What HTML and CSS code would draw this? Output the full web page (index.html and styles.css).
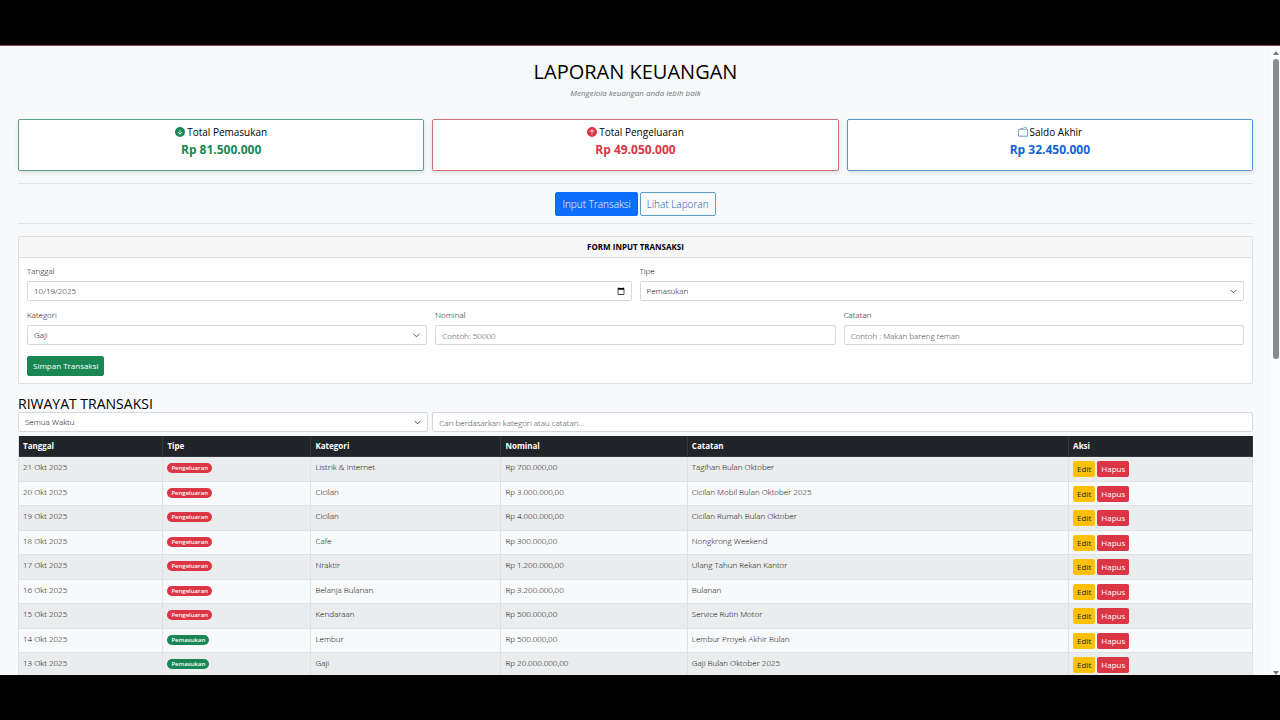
FILE: index.html
```html
<!DOCTYPE html>
<html lang="id">
<head>
    <meta charset="UTF-8">
    <meta name="viewport" content="width=device-width, initial-scale=1.0">
    <title>Laporan Keuangan</title>
    <link rel="stylesheet" href="styles.css">
</head>
<body>
    <div class="screen">
        <main class="container">
            <header class="page-header">
                <h1>LAPORAN KEUANGAN</h1>
                <p>Mengelola keuangan anda lebih baik</p>
            </header>

            <!-- Ringkasan -->
            <section class="summary">
                <div class="summary-card income">
                    <h2>
                        <svg class="icon" viewBox="0 0 16 16" fill="currentColor" aria-hidden="true"><path d="M16 8A8 8 0 1 1 0 8a8 8 0 0 1 16 0M8.5 4.5a.5.5 0 0 0-1 0v5.793L5.354 8.146a.5.5 0 1 0-.708.708l3 3a.5.5 0 0 0 .708 0l3-3a.5.5 0 0 0-.708-.708L8.5 10.293z"/></svg>
                        Total Pemasukan
                    </h2>
                    <div class="amount">Rp 81.500.000</div>
                </div>
                <div class="summary-card expense">
                    <h2>
                        <svg class="icon" viewBox="0 0 16 16" fill="currentColor" aria-hidden="true"><path d="M16 8A8 8 0 1 0 0 8a8 8 0 0 0 16 0m-7.5 3.5a.5.5 0 0 1-1 0V5.707L5.354 7.854a.5.5 0 1 1-.708-.708l3-3a.5.5 0 0 1 .708 0l3 3a.5.5 0 0 1-.708.708L8.5 5.707z"/></svg>
                        Total Pengeluaran
                    </h2>
                    <div class="amount">Rp 49.050.000</div>
                </div>
                <div class="summary-card balance">
                    <h2>
                        <svg class="icon" viewBox="0 0 16 16" fill="currentColor" aria-hidden="true"><path d="M12.136.326A1.5 1.5 0 0 1 14 1.78V3h.5A1.5 1.5 0 0 1 16 4.5v9a1.5 1.5 0 0 1-1.5 1.5h-13A1.5 1.5 0 0 1 0 13.5v-9a1.5 1.5 0 0 1 1.432-1.499zM5.562 3H13V1.78a.5.5 0 0 0-.621-.484zM1.5 4a.5.5 0 0 0-.5.5v9a.5.5 0 0 0 .5.5h13a.5.5 0 0 0 .5-.5v-9a.5.5 0 0 0-.5-.5z"/></svg>
                        Saldo Akhir
                    </h2>
                    <div class="amount">Rp 32.450.000</div>
                </div>
            </section>

            <nav class="tabs">
                <button type="button" class="tab active">Input Transaksi</button>
                <button type="button" class="tab">Lihat Laporan</button>
            </nav>

            <!-- Form transaksi -->
            <section class="form-card">
                <h2 class="form-title">FORM INPUT TRANSAKSI</h2>
                <form class="form-body">
                    <div class="form-row two">
                        <div class="field">
                            <label for="tanggal">Tanggal</label>
                            <input class="control" type="date" id="tanggal" value="2025-10-19">
                        </div>
                        <div class="field">
                            <label for="tipe">Tipe</label>
                            <select class="control" id="tipe">
                                <option>Pemasukan</option>
                                <option>Pengeluaran</option>
                            </select>
                        </div>
                    </div>
                    <div class="form-row three">
                        <div class="field">
                            <label for="kategori">Kategori</label>
                            <select class="control" id="kategori">
                                <option>Gaji</option>
                                <option>Lembur</option>
                            </select>
                        </div>
                        <div class="field">
                            <label for="nominal">Nominal</label>
                            <input class="control" type="number" id="nominal" placeholder="Contoh: 50000">
                        </div>
                        <div class="field">
                            <label for="catatan">Catatan</label>
                            <input class="control" type="text" id="catatan" placeholder="Contoh : Makan bareng teman">
                        </div>
                    </div>
                    <button type="button" class="btn-save">Simpan Transaksi</button>
                </form>
            </section>

            <!-- Riwayat -->
            <section class="history">
                <h2>RIWAYAT TRANSAKSI</h2>
                <div class="filters">
                    <select class="control" aria-label="Filter waktu">
                        <option>Semua Waktu</option>
                    </select>
                    <input class="control" type="text" aria-label="Cari transaksi" placeholder="Cari berdasarkan kategori atau catatan...">
                </div>
                <table class="history-table">
                    <colgroup>
                        <col class="col-date">
                        <col class="col-type">
                        <col class="col-category">
                        <col class="col-amount">
                        <col class="col-note">
                        <col class="col-action">
                    </colgroup>
                    <thead>
                        <tr>
                            <th>Tanggal</th>
                            <th>Tipe</th>
                            <th>Kategori</th>
                            <th>Nominal</th>
                            <th>Catatan</th>
                            <th>Aksi</th>
                        </tr>
                    </thead>
                    <tbody>
                        <tr>
                            <td>21 Okt 2025</td>
                            <td><span class="badge out">Pengeluaran</span></td>
                            <td>Listrik &amp; Internet</td>
                            <td>Rp 700.000,00</td>
                            <td>Tagihan Bulan Oktober</td>
                            <td><div class="actions"><button type="button" class="btn-edit">Edit</button><button type="button" class="btn-delete">Hapus</button></div></td>
                        </tr>
                        <tr>
                            <td>20 Okt 2025</td>
                            <td><span class="badge out">Pengeluaran</span></td>
                            <td>Cicilan</td>
                            <td>Rp 3.000.000,00</td>
                            <td>Cicilan Mobil Bulan Oktober 2025</td>
                            <td><div class="actions"><button type="button" class="btn-edit">Edit</button><button type="button" class="btn-delete">Hapus</button></div></td>
                        </tr>
                        <tr>
                            <td>19 Okt 2025</td>
                            <td><span class="badge out">Pengeluaran</span></td>
                            <td>Cicilan</td>
                            <td>Rp 4.000.000,00</td>
                            <td>Cicilan Rumah Bulan Oktober</td>
                            <td><div class="actions"><button type="button" class="btn-edit">Edit</button><button type="button" class="btn-delete">Hapus</button></div></td>
                        </tr>
                        <tr>
                            <td>18 Okt 2025</td>
                            <td><span class="badge out">Pengeluaran</span></td>
                            <td>Cafe</td>
                            <td>Rp 300.000,00</td>
                            <td>Nongkrong Weekend</td>
                            <td><div class="actions"><button type="button" class="btn-edit">Edit</button><button type="button" class="btn-delete">Hapus</button></div></td>
                        </tr>
                        <tr>
                            <td>17 Okt 2025</td>
                            <td><span class="badge out">Pengeluaran</span></td>
                            <td>Nraktir</td>
                            <td>Rp 1.200.000,00</td>
                            <td>Ulang Tahun Rekan Kantor</td>
                            <td><div class="actions"><button type="button" class="btn-edit">Edit</button><button type="button" class="btn-delete">Hapus</button></div></td>
                        </tr>
                        <tr>
                            <td>16 Okt 2025</td>
                            <td><span class="badge out">Pengeluaran</span></td>
                            <td>Belanja Bulanan</td>
                            <td>Rp 3.200.000,00</td>
                            <td>Bulanan</td>
                            <td><div class="actions"><button type="button" class="btn-edit">Edit</button><button type="button" class="btn-delete">Hapus</button></div></td>
                        </tr>
                        <tr>
                            <td>15 Okt 2025</td>
                            <td><span class="badge out">Pengeluaran</span></td>
                            <td>Kendaraan</td>
                            <td>Rp 500.000,00</td>
                            <td>Service Rutin Motor</td>
                            <td><div class="actions"><button type="button" class="btn-edit">Edit</button><button type="button" class="btn-delete">Hapus</button></div></td>
                        </tr>
                        <tr>
                            <td>14 Okt 2025</td>
                            <td><span class="badge in">Pemasukan</span></td>
                            <td>Lembur</td>
                            <td>Rp 500.000,00</td>
                            <td>Lembur Proyek Akhir Bulan</td>
                            <td><div class="actions"><button type="button" class="btn-edit">Edit</button><button type="button" class="btn-delete">Hapus</button></div></td>
                        </tr>
                        <tr>
                            <td>13 Okt 2025</td>
                            <td><span class="badge in">Pemasukan</span></td>
                            <td>Gaji</td>
                            <td>Rp 20.000.000,00</td>
                            <td>Gaji Bulan Oktober 2025</td>
                            <td><div class="actions"><button type="button" class="btn-edit">Edit</button><button type="button" class="btn-delete">Hapus</button></div></td>
                        </tr>
                    </tbody>
                </table>
            </section>
        </main>

        <div class="scrollbar" aria-hidden="true">
            <svg class="arrow" viewBox="0 0 6 4"><path d="M0 4 3 0l3 4z"/></svg>
            <div class="track"><div class="thumb"></div></div>
            <svg class="arrow" viewBox="0 0 6 4"><path d="M0 0h6L3 4z"/></svg>
        </div>
    </div>
</body>
</html>
```
FILE: styles.css
```css
* {
    box-sizing: border-box;
}

body {
    font-family: 'Open Sans', 'Noto Sans', sans-serif;
    font-size: 8px;
    font-weight: 300;
    line-height: 12px;
    color: #000;
    margin: 0;
    padding: 45px 0;
    height: 100vh;
    background: #000;
    overflow: hidden;
}

h1, h2, p {
    margin: 0;
}

button, input, select {
    font: inherit;
    margin: 0;
}

button {
    cursor: pointer;
}

.screen {
    display: flex;
    height: 100%;
    overflow: hidden;
    background: #f8f9fa;
    border-top: 1px solid #7a4a58;
}

.container {
    flex: 1;
    min-width: 0;
    padding: 12px 18px 0;
}

.page-header {
    text-align: center;
    margin-bottom: 19px;
}

.page-header h1 {
    font-size: 20px;
    line-height: 28px;
    font-weight: 400;
}

.page-header p {
    font-style: italic;
    font-weight: 400;
    color: #6c757d;
    line-height: 14px;
}

/* Ringkasan */
.summary {
    display: grid;
    grid-template-columns: repeat(3, 1fr);
    gap: 8px;
    padding-bottom: 12px;
    border-bottom: 1px solid #e2e4e6;
}

.summary-card {
    background: #fff;
    border: 1px solid;
    border-radius: 2px;
    min-height: 52px;
    padding-top: 4px;
    text-align: center;
    box-shadow: 0 2px 4px rgba(0,0,0,0.1);
}

.summary-card h2 {
    display: flex;
    justify-content: center;
    align-items: center;
    gap: 2px;
    font-size: 10px;
    line-height: 16px;
    font-weight: 500;
    color: #000;
}

.summary-card .amount {
    font-size: 12px;
    line-height: 20px;
    font-weight: 700;
}

.icon {
    width: 10px;
    height: 10px;
}

.income, .income .icon { color: #198754; }
.expense, .expense .icon { color: #dc3545; }
.balance { color: #0d62d8; }
.balance .icon { color: #2f7dc0; }

.income { border-color: #5f9f82; }
.expense { border-color: #cf7078; }
.balance { border-color: #5b94cf; }

.tabs {
    display: flex;
    justify-content: center;
    gap: 2px;
    padding: 8px 0 7px;
    margin-bottom: 12px;
    border-bottom: 1px solid #e2e4e6;
}

.tab {
    height: 24px;
    padding: 0 6px;
    font-size: 10px;
    color: #0d62ad;
    background: transparent;
    border: 1px solid #5b9bd0;
    border-radius: 2px;
}

.tab.active {
    color: #fff;
    background: #0d6efd;
    border-color: #0d6efd;
}

/* Form */
.form-card {
    background: #fff;
    border: 1px solid #dfe0e2;
    border-radius: 2px;
    margin-bottom: 12px;
}

.form-title {
    font-size: 8px;
    line-height: 20px;
    font-weight: 700;
    text-align: center;
    background: #f7f7f7;
    border-bottom: 1px solid #dfe0e2;
}

.form-body {
    padding: 7px 8px;
}

.form-row {
    display: grid;
    gap: 8px;
}

.two {
    grid-template-columns: 1fr 1fr;
    margin-bottom: 8px;
}

.three {
    grid-template-columns: 1fr 1fr 1fr;
    margin-bottom: 11px;
}

.field label {
    display: block;
    margin-bottom: 4px;
}

.control {
    display: block;
    width: 100%;
    height: 20px;
    padding: 0 6px;
    color: #000;
    background-color: #fff;
    border: 1px solid #d5d9dd;
    border-radius: 2px;
}

.control::placeholder {
    color: #30363b;
}

.control::-webkit-calendar-picker-indicator {
    width: 8px;
    height: 8px;
    padding: 0;
}

.control::-webkit-datetime-edit-month-field,
.control::-webkit-datetime-edit-day-field,
.control::-webkit-datetime-edit-year-field {
    padding: 0;
}

select.control {
    appearance: none;
    background-image: url("data:image/svg+xml,%3Csvg xmlns='http://www.w3.org/2000/svg' viewBox='0 0 16 16'%3E%3Cpath fill='none' stroke='%23343a40' stroke-linecap='round' stroke-linejoin='round' stroke-width='2' d='m2 5 6 6 6-6'/%3E%3C/svg%3E");
    background-repeat: no-repeat;
    background-position: right 6px center;
    background-size: 7px;
}

.btn-save {
    display: block;
    height: 20px;
    padding: 0 5px;
    font-weight: 400;
    color: #fff;
    background: #198754;
    border: 1px solid #198754;
    border-radius: 2px;
}

/* Riwayat */
.history h2 {
    font-size: 14px;
    line-height: 16px;
    font-weight: 400;
}

.filters {
    display: grid;
    grid-template-columns: 1fr 2fr;
    gap: 4px;
    margin-bottom: 4px;
}

.history-table {
    width: 100%;
    table-layout: fixed;
    border-collapse: separate;
    border-spacing: 0;
    border-left: 1px solid #dee2e6;
}

.col-date { width: 11.7%; }
.col-type { width: 12%; }
.col-category { width: 15.4%; }
.col-amount { width: 15.1%; }
.col-note { width: 30.9%; }
.col-action { width: 14.9%; }

.history-table th,
.history-table td {
    padding: 4px;
    text-align: left;
    vertical-align: top;
    border-right: 1px solid #dfe1e4;
    border-bottom: 1px solid #dfe1e4;
}

.history-table th {
    font-weight: 700;
    color: #fff;
    background: #212529;
    border-color: #32383e;
}

.history-table tbody tr:nth-child(odd) {
    background: #ebeced;
}

.history-table tbody tr:nth-child(even) td {
    padding-bottom: 3px;
}

.badge {
    display: inline-block;
    padding: 0 4px;
    font-size: 6px;
    line-height: 10px;
    font-weight: 600;
    color: #fff;
    border-radius: 5px;
}

.badge.out { background: #dc3545; }
.badge.in { background: #198754; }

.actions {
    display: flex;
    gap: 2px;
}

.btn-edit,
.btn-delete {
    height: 16px;
    padding: 0 3px;
    font-weight: 400;
    line-height: 14px;
    border: 1px solid transparent;
    border-radius: 2px;
}

.btn-edit {
    color: #212529;
    background: #ffc107;
}

.btn-delete {
    color: #fff;
    background: #dc3545;
}

/* Scrollbar */
.scrollbar {
    display: flex;
    flex-direction: column;
    align-items: center;
    width: 9px;
    padding-top: 5px;
    background: #fcfcfc;
}

.arrow {
    width: 6px;
    height: 4px;
    fill: #777;
}

.track {
    flex: 1;
    padding-top: 4px;
}

.thumb {
    width: 6px;
    height: 49%;
    background: #8b8b8b;
    border-radius: 3px;
}
```
